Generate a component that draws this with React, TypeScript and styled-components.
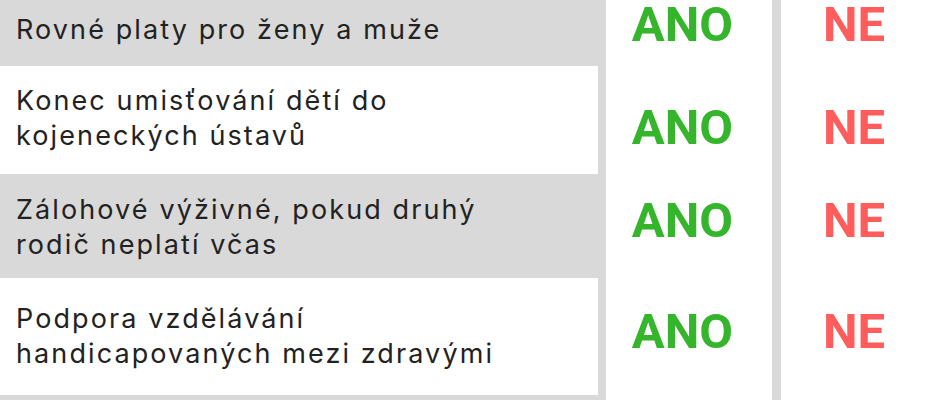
import React from "react";
import styled, { createGlobalStyle } from "styled-components";

const Global = createGlobalStyle`
  html, body { margin: 0; padding: 0; }
  body { background: #d9d9d9; width: 940px; height: 400px; overflow: hidden; }
`;

const Board = styled.div`
  display: flex;
  width: 940px;
  height: 400px;
  background: #d9d9d9;
`;

const Topics = styled.div`
  width: 598px;
  display: flex;
  flex-direction: column;
`;

const Topic = styled.div<{ $h: number; $white?: boolean; $pt: number }>`
  height: ${(p) => p.$h}px;
  box-sizing: border-box;
  padding: ${(p) => p.$pt}px 60px 0 16px;
  background: ${(p) => (p.$white ? "#ffffff" : "transparent")};
  font-family: Inter, "Noto Sans", sans-serif;
  font-size: 27px;
  line-height: 35px;
  letter-spacing: 2.1px;
  color: #222222;
`;

const Answers = styled.div<{ $left: number; $w: number }>`
  margin-left: ${(p) => p.$left}px;
  width: ${(p) => p.$w}px;
  background: #ffffff;
  display: flex;
  flex-direction: column;
`;

const Answer = styled.div<{ $yes?: boolean; $top: number }>`
  margin-top: ${(p) => p.$top}px;
  height: 50px;
  line-height: 50px;
  padding-right: 13px;
  text-align: center;
  font-family: Roboto, "Liberation Sans", sans-serif;
  font-weight: 700;
  font-size: 49px;
  color: ${(p) => (p.$yes ? "#34b52b" : "#ff5c5c")};
`;

const rows = [
  { text: "Rovné platy pro ženy a muže", h: 66, white: false, pt: 12 },
  { text: "Konec umisťování dětí do kojeneckých ústavů", h: 108, white: true, pt: 17 },
  { text: "Zálohové výživné, pokud druhý rodič neplatí včas", h: 104, white: false, pt: 18 },
  { text: "Podpora vzdělávání handicapovaných mezi zdravými", h: 117, white: true, pt: 23 },
];

const tops = [0, 53, 43, 61];

export default function App() {
  return (
    <>
      <Global />
      <Board>
        <Topics>
          {rows.map((r) => (
            <Topic key={r.text} $h={r.h} $white={r.white} $pt={r.pt}>
              {r.text}
            </Topic>
          ))}
        </Topics>
        <Answers $left={8} $w={166}>
          {tops.map((t, i) => (
            <Answer key={i} $yes $top={t}>ANO</Answer>
          ))}
        </Answers>
        <Answers $left={9} $w={159}>
          {tops.map((t, i) => (
            <Answer key={i} $top={t}>NE</Answer>
          ))}
        </Answers>
      </Board>
    </>
  );
}
